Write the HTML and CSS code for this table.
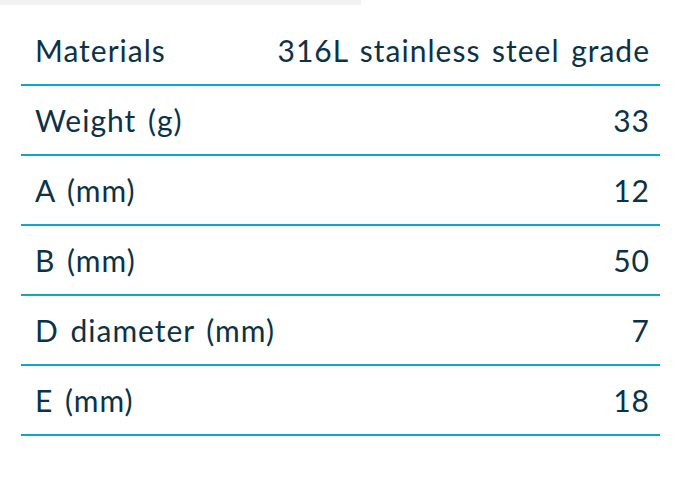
FILE: index.html
```html
<!DOCTYPE html>
<html>
<head>
<meta charset="utf-8">
<link rel="stylesheet" href="styles.css">
</head>
<body>
<div class="topbar"></div>
<div class="specs">
  <div class="row"><span class="key">Materials</span><span class="val">316L stainless steel grade</span></div>
  <div class="row"><span class="key">Weight (g)</span><span class="val">33</span></div>
  <div class="row"><span class="key">A (mm)</span><span class="val">12</span></div>
  <div class="row"><span class="key">B (mm)</span><span class="val">50</span></div>
  <div class="row"><span class="key">D diameter (mm)</span><span class="val">7</span></div>
  <div class="row"><span class="key">E (mm)</span><span class="val">18</span></div>
</div>
</body>
</html>
```
FILE: styles.css
```css
html, body { margin: 0; padding: 0; background: #fff; }
body { font-family: Lato, "Noto Sans", sans-serif; color: #0c3247; }
.topbar { width: 361px; height: 5px; background: #f2f2f2; }
.specs {
  margin: 11px 0 0 21px;
  width: 639px;
  display: flex;
  flex-direction: column;
}
.row {
  height: 68px;
  display: flex;
  align-items: center;
  justify-content: space-between;
  padding: 0 11px 0 14px;
  border-bottom: 2px solid #0aa9c9;
  font-size: 30px;
  line-height: 34px;
  letter-spacing: 1px;
  word-spacing: 3px;
  white-space: nowrap;
}
.val { margin-right: -1px; }
```
